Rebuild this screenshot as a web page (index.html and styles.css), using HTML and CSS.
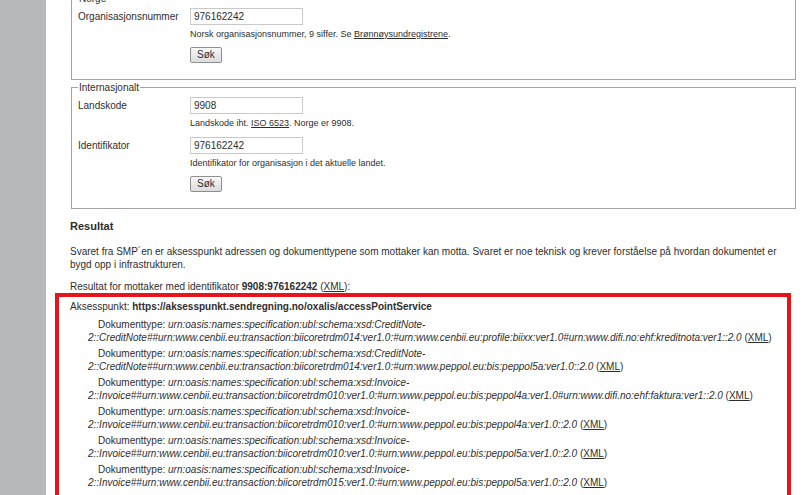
FILE: index.html
```html
<!DOCTYPE html>
<html lang="no">
<head>
    <meta charset="UTF-8">
    <meta name="viewport" content="width=device-width, initial-scale=1.0">
    <title>SMP-oppslag</title>
    <link rel="stylesheet" href="styles.css">
</head>
<body>
<div class="layout">
    <div class="sidebar"></div>
    <div class="main">
        <fieldset class="lookup first">
            <legend>Norge</legend>
            <div class="row">
                <label for="orgnr">Organisasjonsnummer</label>
                <div class="field">
                    <input id="orgnr" type="text" value="976162242">
                    <p class="help">Norsk organisasjonsnummer, 9 siffer. Se <a href="#">Brønnøysundregistrene</a>.</p>
                </div>
            </div>
            <div class="actions"><button type="button">Søk</button></div>
        </fieldset>

        <fieldset class="lookup">
            <legend>Internasjonalt</legend>
            <div class="row">
                <label for="landskode">Landskode</label>
                <div class="field">
                    <input id="landskode" type="text" value="9908">
                    <p class="help">Landskode iht. <a href="#">ISO 6523</a>. Norge er 9908.</p>
                </div>
            </div>
            <div class="row">
                <label for="ident">Identifikator</label>
                <div class="field">
                    <input id="ident" type="text" value="976162242">
                    <p class="help">Identifikator for organisasjon i det aktuelle landet.</p>
                </div>
            </div>
            <div class="actions"><button type="button">Søk</button></div>
        </fieldset>

        <h2>Resultat</h2>
        <p>Svaret fra SMP´en er aksesspunkt adressen og dokumenttypene som mottaker kan motta. Svaret er noe teknisk og krever forståelse på hvordan dokumentet er bygd opp i infrastrukturen.</p>
        <p class="result-for">Resultat for mottaker med identifikator <b>9908:976162242</b> (<a href="#">XML</a>):</p>

        <div class="result-box">
            <p class="access-point">Aksesspunkt: <b>https://aksesspunkt.sendregning.no/oxalis/accessPointService</b></p>
            <p class="doctype">Dokumenttype: <i>urn:oasis:names:specification:ubl:schema:xsd:CreditNote-<br>2::CreditNote##urn:www.cenbii.eu:transaction:biicoretrdm014:ver1.0:#urn:www.cenbii.eu:profile:biixx:ver1.0#urn:www.difi.no:ehf:kreditnota:ver1::2.0</i> (<a href="#">XML</a>)</p>
            <p class="doctype">Dokumenttype: <i>urn:oasis:names:specification:ubl:schema:xsd:CreditNote-<br>2::CreditNote##urn:www.cenbii.eu:transaction:biicoretrdm014:ver1.0:#urn:www.peppol.eu:bis:peppol5a:ver1.0::2.0</i> (<a href="#">XML</a>)</p>
            <p class="doctype">Dokumenttype: <i>urn:oasis:names:specification:ubl:schema:xsd:Invoice-<br>2::Invoice##urn:www.cenbii.eu:transaction:biicoretrdm010:ver1.0:#urn:www.peppol.eu:bis:peppol4a:ver1.0#urn:www.difi.no:ehf:faktura:ver1::2.0</i> (<a href="#">XML</a>)</p>
            <p class="doctype">Dokumenttype: <i>urn:oasis:names:specification:ubl:schema:xsd:Invoice-<br>2::Invoice##urn:www.cenbii.eu:transaction:biicoretrdm010:ver1.0:#urn:www.peppol.eu:bis:peppol4a:ver1.0::2.0</i> (<a href="#">XML</a>)</p>
            <p class="doctype">Dokumenttype: <i>urn:oasis:names:specification:ubl:schema:xsd:Invoice-<br>2::Invoice##urn:www.cenbii.eu:transaction:biicoretrdm010:ver1.0:#urn:www.peppol.eu:bis:peppol5a:ver1.0::2.0</i> (<a href="#">XML</a>)</p>
            <p class="doctype">Dokumenttype: <i>urn:oasis:names:specification:ubl:schema:xsd:Invoice-<br>2::Invoice##urn:www.cenbii.eu:transaction:biicoretrdm015:ver1.0:#urn:www.peppol.eu:bis:peppol5a:ver1.0::2.0</i> (<a href="#">XML</a>)</p>
        </div>
    </div>
</div>
</body>
</html>
```

FILE: styles.css
```css
:root {
    --text-color: #2e2e2e;
    --sidebar-color: #b8b9bc;
    --border-color: #a3a3a3;
    --input-border: #c9c9c9;
    --mark-color: #e8141c;
}

html, body {
    margin: 0;
    height: 100%;
    overflow: hidden;
}
body {
    background-color: white;
    font-family: "Liberation Sans", Arial, sans-serif;
    font-size: 10px;
    line-height: 13px;
    color: var(--text-color);
}
a {
    color: var(--text-color);
    text-decoration: underline;
}
p {
    margin: 0 0 9px;
}

.layout {
    display: flex;
    min-height: 100%;
}
.sidebar {
    width: 46px;
    flex-shrink: 0;
    background-color: var(--sidebar-color);
}
.main {
    flex: 1;
    min-width: 0;
    padding: 0 12px 0 24px;
}

/* skjema */
fieldset {
    min-inline-size: 0;
    margin: 0 0 1px 1px;
    padding: 3px 10px 16px 6px;
    border: 1px solid var(--border-color);
}
fieldset.first {
    margin-top: -8.5px;
}
legend {
    padding: 0 1px;
    line-height: 13px;
}
.row {
    display: grid;
    grid-template-columns: 112px 1fr;
    margin-bottom: 7.5px;
}
.row label {
    line-height: 17px;
}
.field input {
    display: block;
    box-sizing: border-box;
    width: 113px;
    height: 17px;
    margin: 0;
    padding: 0 3px;
    border: 1px solid var(--input-border);
    font: inherit;
    color: var(--text-color);
}
.help {
    margin: 3px 0 0;
    font-size: 9px;
    line-height: 12px;
}
.actions {
    padding-left: 112px;
}
button {
    display: block;
    height: 16px;
    margin: 0;
    padding: 0 6px;
    font: inherit;
    line-height: 14px;
    color: var(--text-color);
    border: 1px solid #8f8f8f;
    border-radius: 2px;
    background: linear-gradient(#f8f8f8, #dcdcdc);
    cursor: pointer;
}

/* resultat */
h2 {
    margin: 10px 0 10.5px;
    font-size: 11px;
    line-height: 15px;
}
.result-for {
    margin-bottom: 0;
}
.result-box {
    margin: 0 5px 0 -15px;
    padding: 3px 0 40px 11px;
    border: 4px solid var(--mark-color);
    line-height: 13px;
}
.access-point {
    margin: 0 0 5px;
}
.doctype {
    margin: 0 0 3px 18px;
    text-indent: 10px;
}
```
